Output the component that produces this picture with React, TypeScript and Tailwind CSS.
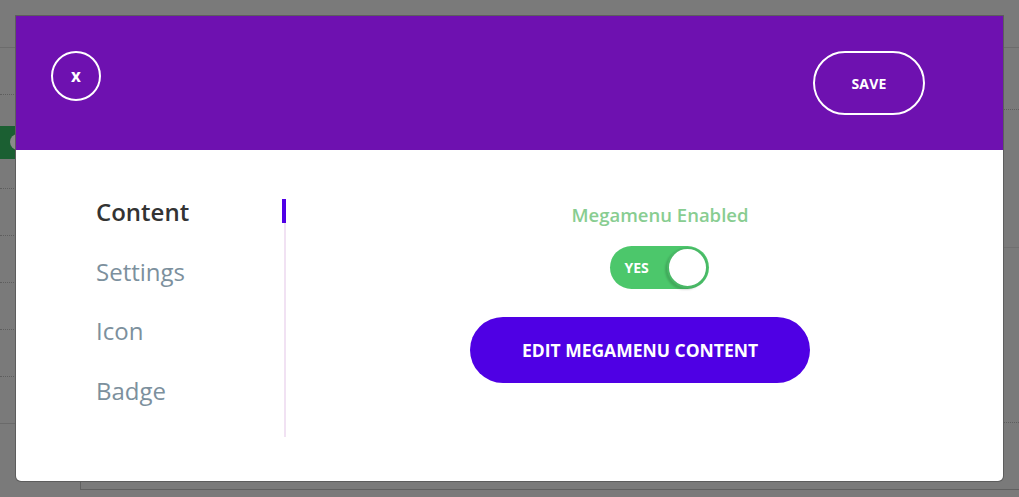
import React, { useState } from "react"

const tabs = ["Content", "Settings", "Icon", "Badge"]

const Backdrop: React.FC = () => (
  <div className="absolute inset-0 bg-[#7a7a7a]">
    <div className="absolute left-0 right-0 top-[47px] border-t border-[#6c6c6c]" />
    <div className="absolute left-0 w-[16px] top-[94px] border-t border-dotted border-[#5e5e5e]" />
    <div className="absolute left-0 w-[16px] top-[126px] h-[33px] bg-[#1b5f32]">
      <div className="absolute left-[10px] top-[8px] w-[16px] h-[16px] rounded-full bg-[#8a8a8a]" />
    </div>
    {[188, 235, 282, 329, 376].map((y) => (
      <div
        key={y}
        className="absolute left-0 w-[16px] border-t border-dotted border-[#5e5e5e]"
        style={{ top: y }}
      />
    ))}
    <div className="absolute left-0 w-[16px] top-[423px] border-t border-[#6a6a6a]" />
    <div className="absolute right-0 w-[16px] top-[109px] border-t border-dotted border-[#5e5e5e]" />
    <div className="absolute right-0 w-[16px] top-[247px] border-t border-[#707070]" />
    <div className="absolute right-0 w-[16px] top-[422px] border-t border-dotted border-[#5e5e5e]" />
    <div className="absolute left-[80px] right-0 top-[460px] h-[30px] border-l border-b border-[#606060]" />
  </div>
)

export default function App() {
  const [active, setActive] = useState("Content")
  const [enabled, setEnabled] = useState(true)

  return (
    <div
      className="relative w-[1019px] h-[497px] overflow-hidden"
      style={{ fontFamily: "'Open Sans', 'Noto Sans', sans-serif" }}>
      <Backdrop />

      {/* Modal */}
      <div className="absolute left-[16px] top-[16px] w-[987px] h-[465px] bg-white rounded-b-[5px] shadow-[0_0_0_1px_#5d5d5d] flex flex-col overflow-hidden">
        {/* Header */}
        <div className="h-[134px] bg-[#6e11b0] flex items-start justify-between pl-[35px] pr-[78px] pt-[35px]">
          <button className="w-[50px] h-[50px] rounded-full border-2 border-white text-white text-[17px] font-bold leading-none flex items-center justify-center pb-[2px]">
            x
          </button>
          <button className="w-[112px] h-[64px] rounded-full border-2 border-white text-white text-[14px] font-bold tracking-[0.2px]">
            SAVE
          </button>
        </div>

        {/* Body */}
        <div className="flex flex-1 pt-[49px]">
          <nav className="w-[268px] pl-[80px] flex flex-col">
            {tabs.map((t) => (
              <button
                key={t}
                onClick={() => setActive(t)}
                className={`h-[59.5px] text-left text-[24px] leading-[26px] pb-[33px] ${
                  active === t
                    ? "text-[#333333] font-semibold"
                    : "text-[#7c909d]"
                }`}>
                {t}
              </button>
            ))}
          </nav>

          <div className="relative w-[2px] h-[238px] bg-[#f1e2f3]">
            <div className="absolute left-[-2px] top-0 w-[4px] h-[24px] bg-[#5000e6]" />
          </div>

          <div className="flex-1 flex flex-col items-center pt-[4px] pr-[9px]">
            <div className="ml-[40px] text-[18.5px] font-semibold text-[#88cd91] leading-[24px]">
              Megamenu Enabled
            </div>
            <button
              onClick={() => setEnabled(!enabled)}
              className="ml-[38px] mt-[19px] w-[99px] h-[43px] rounded-full bg-[#4cc76b] flex items-center justify-between pl-[15px] pr-[1px]">
              <span className="text-white text-[14px] font-bold">YES</span>
              <span className="w-[41px] h-[41px] rounded-full bg-white border-2 border-[#49b866] shadow-[-2px_2px_2px_rgba(0,0,0,0.15)]" />
            </button>
            <button className="mt-[28px] w-[340px] h-[66px] rounded-full bg-[#4f00e4] text-white text-[17.5px] font-bold">
              EDIT MEGAMENU CONTENT
            </button>
          </div>
        </div>
      </div>
    </div>
  )
}
